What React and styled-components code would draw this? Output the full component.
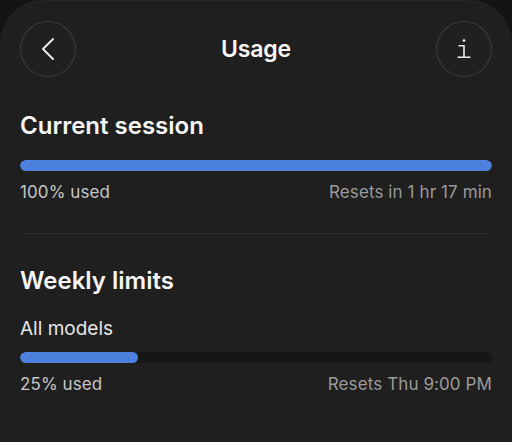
import React from "react";
import styled, {createGlobalStyle} from "styled-components";

const GlobalStyle = createGlobalStyle`
  html, body {
    margin: 0;
    padding: 0;
    background: #141414;
  }
  body {
    font-family: Inter, "Noto Sans", sans-serif;
    -webkit-font-smoothing: antialiased;
  }
`;

const Panel = styled.div`
  min-height: 442px;
  box-sizing: border-box;
  background: #1f1f1f;
  border-radius: 44px 44px 0 0;
  padding: 21px 20px 0;
  box-shadow: inset 0 1px 0 rgba(255, 255, 255, 0.04);
`;

const Header = styled.div`
  display: grid;
  grid-template-columns: 56px 1fr 56px;
  align-items: center;
  height: 56px;
`;

const RoundButton = styled.button`
  width: 56px;
  height: 56px;
  border-radius: 50%;
  border: 1px solid rgba(255, 255, 255, 0.13);
  background: #202020;
  color: #e8e8e8;
  display: flex;
  align-items: center;
  justify-content: center;
  padding: 0;
  cursor: pointer;
`;

const Title = styled.h1`
  margin: 0;
  text-align: center;
  font-size: 23px;
  font-weight: 600;
  color: #f7f7f7;
  letter-spacing: -0.2px;
`;

const Section = styled.section`
  padding-top: ${({top}) => top}px;
  padding-bottom: ${({bottom}) => bottom}px;
  border-bottom: ${({divider}) => (divider ? "1px solid #2b2b2b" : "none")};
`;

const Heading = styled.h2`
  margin: 0;
  font-size: 24px;
  line-height: 30px;
  font-weight: 600;
  color: #f5f5f5;
  letter-spacing: 0;
`;

const Label = styled.div`
  margin-top: 21px;
  font-size: 19px;
  line-height: 24px;
  color: #e6e6e6;
`;

const Track = styled.div`
  margin-top: ${({gap}) => gap}px;
  height: 11px;
  border-radius: 6px;
  background: #161616;
  overflow: hidden;
`;

const Fill = styled.div`
  height: 100%;
  border-radius: 6px;
  background: #4c82de;
`;

const Meta = styled.div`
  margin-top: 9px;
  display: flex;
  justify-content: space-between;
  font-size: 17px;
  line-height: 24px;
`;

const Used = styled.span`
  color: #c6c6c6;
  letter-spacing: 0.1px;
`;

const Resets = styled.span`
  color: #9a9a9a;
  font-size: 17px;
  letter-spacing: 0.1px;
`;

function ChevronLeft() {
    return (
        <svg width="14" height="22" viewBox="0 0 14 22" fill="none">
            <path d="M12 1 L2 11 L12 21" stroke="#ededed" strokeWidth="1.8" strokeLinecap="round" strokeLinejoin="round"/>
        </svg>
    );
}

function InfoGlyph() {
    return (
        <svg width="16" height="20" viewBox="0 0 16 20" fill="none">
            <circle cx="8" cy="1.6" r="1.4" fill="#ededed"/>
            <path d="M2.5 6.8 H8 V18.2 M1.5 18.2 H14.5" stroke="#ededed" strokeWidth="1.6"/>
        </svg>
    );
}

function Meter({pct, gap}) {
    return (
        <Track gap={gap}>
            <Fill style={{width: `${pct}%`}}/>
        </Track>
    );
}

export default function App() {
    return (
        <>
            <GlobalStyle/>
            <Panel>
                <Header>
                    <RoundButton aria-label="Back"><ChevronLeft/></RoundButton>
                    <Title>Usage</Title>
                    <RoundButton aria-label="Info"><InfoGlyph/></RoundButton>
                </Header>

                <Section top={34} bottom={29} divider>
                    <Heading>Current session</Heading>
                    <Meter pct={100} gap={19}/>
                    <Meta>
                        <Used>100% used</Used>
                        <Resets>Resets in 1 hr 17 min</Resets>
                    </Meta>
                </Section>

                <Section top={32} bottom={0}>
                    <Heading>Weekly limits</Heading>
                    <Label>All models</Label>
                    <Meter pct={25} gap={11}/>
                    <Meta>
                        <Used>25% used</Used>
                        <Resets>Resets Thu 9:00 PM</Resets>
                    </Meta>
                </Section>
            </Panel>
        </>
    );
}
